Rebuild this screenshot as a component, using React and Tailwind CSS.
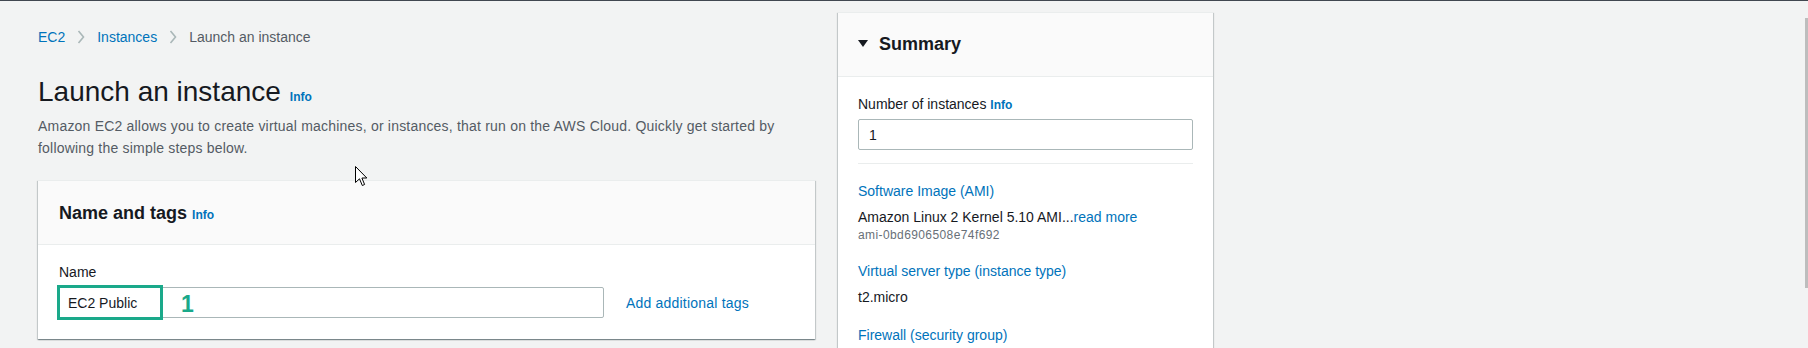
import React from 'react';

const font = "font-['Liberation_Sans',Arial,sans-serif]";

function Chevron() {
  return (
    <svg className="mx-3 w-2 h-[14px]" viewBox="0 0 8 14" fill="none">
      <polyline points="1.5,1 6.5,7 1.5,13" stroke="#aab7b8" strokeWidth="1.6" />
    </svg>
  );
}

function Info() {
  return <span className="text-xs font-bold text-[#0073bb]">Info</span>;
}

function SummaryItem({ title, children, first }) {
  return (
    <div className={first ? 'mt-[17px]' : 'mt-[18px]'}>
      <div className="text-sm leading-5 text-[#0073bb]">{title}</div>
      <div className="mt-[6px]">{children}</div>
    </div>
  );
}

export default function App() {
  return (
    <div className={`${font} relative w-full h-[348px] overflow-hidden bg-[#f2f3f3] border-t border-[#414750] text-[#16191f]`}>
      <div className="flex pl-[38px]">
        {/* Main column */}
        <div className="w-[777px] pt-[26px]">
          <nav className="flex items-center h-5 text-sm">
            <span className="text-[#0073bb]">EC2</span>
            <Chevron />
            <span className="text-[#0073bb]">Instances</span>
            <Chevron />
            <span className="text-[#545b64]">Launch an instance</span>
          </nav>

          <div className="mt-[27px] flex items-baseline h-9">
            <h1 className="text-[28px] leading-9 font-normal">Launch an instance</h1>
            <span className="ml-[9px]"><Info /></span>
          </div>
          <p className="mt-[5px] text-sm leading-[22px] tracking-[0.2px] text-[#545b64]">
            Amazon EC2 allows you to create virtual machines, or instances, that run on the AWS Cloud. Quickly get started by following the simple steps below.
          </p>

          <div className="mt-[21px] bg-white shadow-[0_1px_1px_0_rgba(0,28,36,0.3),1px_1px_1px_0_rgba(0,28,36,0.15),-1px_1px_1px_0_rgba(0,28,36,0.15)] border-t border-[#eaeded]">
            <div className="h-[64px] bg-[#fafafa] border-b border-[#eaeded] pl-[21px] flex items-center">
              <h2 className="text-lg leading-[22px] font-bold">Name and tags</h2>
              <span className="ml-[5px] leading-[22px] pt-[2px]"><Info /></span>
            </div>
            <div className="pl-[20px] pt-[17px] pb-[21px]">
              <div className="text-sm leading-5 pl-px">Name</div>
              <div className="mt-[5px] flex items-center">
                <div className="relative w-[546px] h-[31px] border border-[#aab7b8] rounded-[2px] flex items-center pl-[9px] text-sm">
                  EC2 Public
                  <div className="absolute -left-[2px] -top-[3px] w-[106px] h-[35px] border-[3px] border-[#1aa98a]" />
                  <span className="absolute left-[122px] top-[3px] text-[23px] leading-[26px] font-bold text-[#1aa98a]">1</span>
                </div>
                <a className="ml-[22px] text-sm leading-5 tracking-[0.2px] text-[#0073bb]">Add additional tags</a>
              </div>
            </div>
          </div>
        </div>

        {/* Summary panel */}
        <aside className="ml-[23px] mt-[11px] w-[375px] h-[400px] bg-white border-t border-[#eaeded] shadow-[0_1px_1px_0_rgba(0,28,36,0.3),1px_1px_1px_0_rgba(0,28,36,0.15),-1px_1px_1px_0_rgba(0,28,36,0.15)]">
          <div className="h-[64px] bg-[#fafafa] border-b border-[#eaeded] px-5 flex items-center">
            <svg className="w-[10px] h-[8px] -mt-[2px]" viewBox="0 0 10 8">
              <polygon points="0,0 10,0 5,7" fill="#16191f" />
            </svg>
            <h2 className="ml-[11px] text-lg leading-[22px] font-bold -mt-[2px]">Summary</h2>
          </div>
          <div className="px-5 pt-[17px]">
            <div className="text-sm leading-5 text-[#16191f]">
              Number of instances <Info />
            </div>
            <div className="mt-[5px] h-[31px] border border-[#aab7b8] rounded-[2px] flex items-center pl-[10px] text-sm">1</div>
            <div className="mt-[13px] border-t border-[#eaeded]" />
            <SummaryItem title="Software Image (AMI)" first>
              <div className="text-sm leading-5">
                Amazon Linux 2 Kernel 5.10 AMI...<span className="text-[#0073bb]">read more</span>
              </div>
              <div className="text-xs leading-4 tracking-[0.4px] text-[#687078]">ami-0bd6906508e74f692</div>
            </SummaryItem>
            <SummaryItem title="Virtual server type (instance type)">
              <div className="text-sm leading-5">t2.micro</div>
            </SummaryItem>
            <SummaryItem title="Firewall (security group)" />
          </div>
        </aside>
      </div>

      {/* mouse pointer */}
      <svg className="absolute left-[355px] top-[165px] w-[13px] h-[21px]" viewBox="0 0 13 21">
        <path d="M0.5,0.5 L0.5,16.5 L4.5,12.8 L7.3,19.5 L9.6,18.5 L6.9,12 L11.8,12 Z" fill="#fff" stroke="#000" strokeWidth="1" strokeLinejoin="round" />
      </svg>

      {/* scrollbar */}
      <div className="absolute right-0 top-[17px] w-[3px] h-[270px] bg-[#bdbdbd]" />
    </div>
  );
}
